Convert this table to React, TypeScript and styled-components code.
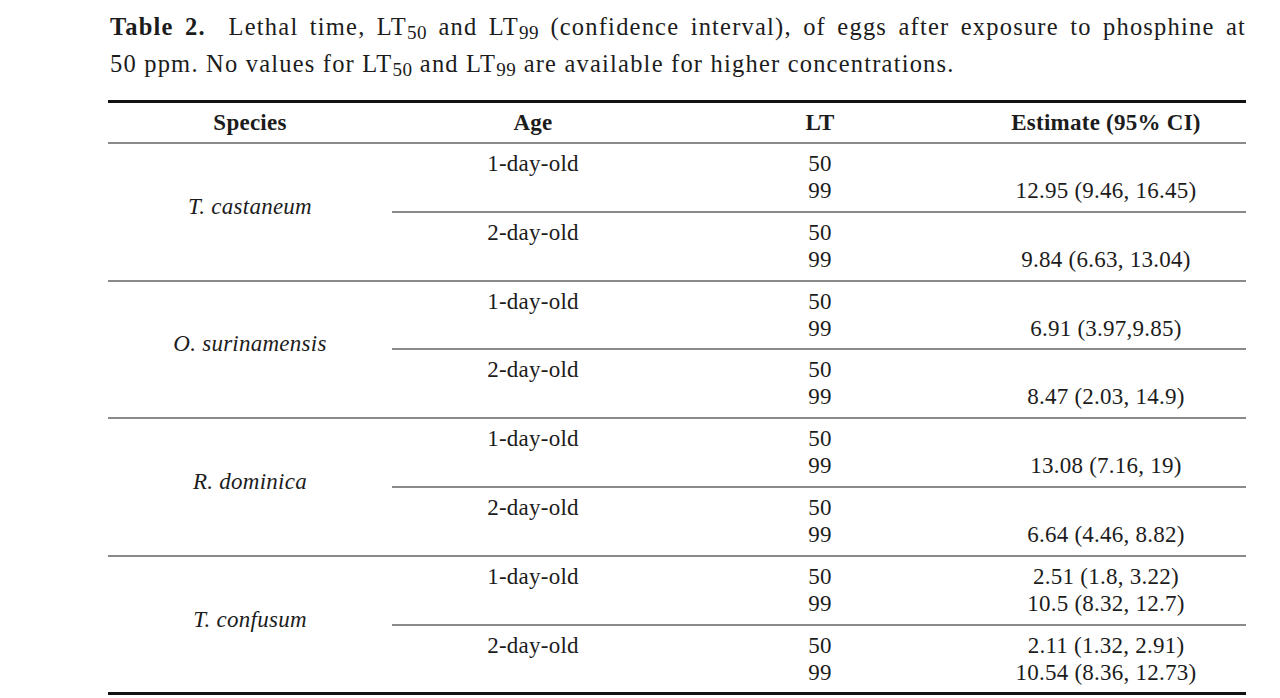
import * as React from 'react'
import styled, {createGlobalStyle} from 'styled-components'

const GlobalStyle = createGlobalStyle`
  html, body {
    margin: 0;
    padding: 0;
    background: #fff;
  }
  body {
    font-family: "Liberation Serif", "Times New Roman", serif;
    color: #1c1c1c;
  }
`

const StyledPage = styled.main`
  padding: 8px 0 0 108px;
  width: 1138px;
`

const StyledCaption = styled.p`
  margin: 0 0 18px 2px;
  font-size: 24.5px;
  line-height: 37px;
  letter-spacing: 1.2px;
`

const StyledCaptionLine = styled.span<{$justify?: boolean}>`
  display: block;
  text-align: ${(p) => (p.$justify ? 'justify' : 'left')};
  text-align-last: ${(p) => (p.$justify ? 'justify' : 'left')};
`

const StyledSub = styled.sub`
  font-size: 0.78em;
  vertical-align: -0.22em;
  line-height: 0;
  letter-spacing: 0.5px;
`

const StyledTable = styled.table`
  width: 1138px;
  border-collapse: collapse;
  table-layout: fixed;
  font-size: 23px;
  letter-spacing: 0.25px;
  border-top: 3px solid #111;
  border-bottom: 3px solid #111;
`

const StyledHeadCell = styled.th`
  font-weight: bold;
  text-align: center;
  line-height: 39px;
  padding: 0;
  border-bottom: 2px solid #8a8a8a;
`

const StyledSpeciesCell = styled.td`
  font-style: italic;
  text-align: center;
  vertical-align: middle;
  padding: 0 0 10px;
  border-bottom: 2px solid #8a8a8a;
`

const StyledCell = styled.td`
  text-align: center;
  vertical-align: top;
  line-height: 27px;
  padding: 6px 0 6.8px;
  border-bottom: 2px solid #8a8a8a;
`

const StyledLine = styled.div`
  height: 27px;
`

type AgeGroup = {age: string; est50: string; est99: string}
type Species = {name: string; groups: AgeGroup[]}

const data: Species[] = [
  {
    name: 'T. castaneum',
    groups: [
      {age: '1-day-old', est50: '', est99: '12.95 (9.46, 16.45)'},
      {age: '2-day-old', est50: '', est99: '9.84 (6.63, 13.04)'},
    ],
  },
  {
    name: 'O. surinamensis',
    groups: [
      {age: '1-day-old', est50: '', est99: '6.91 (3.97,9.85)'},
      {age: '2-day-old', est50: '', est99: '8.47 (2.03, 14.9)'},
    ],
  },
  {
    name: 'R. dominica',
    groups: [
      {age: '1-day-old', est50: '', est99: '13.08 (7.16, 19)'},
      {age: '2-day-old', est50: '', est99: '6.64 (4.46, 8.82)'},
    ],
  },
  {
    name: 'T. confusum',
    groups: [
      {age: '1-day-old', est50: '2.51 (1.8, 3.22)', est99: '10.5 (8.32, 12.7)'},
      {age: '2-day-old', est50: '2.11 (1.32, 2.91)', est99: '10.54 (8.36, 12.73)'},
    ],
  },
]

const App = () => {
  return (
    <StyledPage>
      <GlobalStyle />
      <StyledCaption>
        <StyledCaptionLine $justify>
          <b>Table 2.</b>&nbsp; Lethal time, LT<StyledSub>50</StyledSub> and LT
          <StyledSub>99</StyledSub> (confidence interval), of eggs after exposure to phosphine at
        </StyledCaptionLine>
        <StyledCaptionLine>
          50 ppm. No values for LT<StyledSub>50</StyledSub> and LT<StyledSub>99</StyledSub> are
          available for higher concentrations.
        </StyledCaptionLine>
      </StyledCaption>
      <StyledTable>
        <colgroup>
          <col style={{width: 284}} />
          <col style={{width: 282}} />
          <col style={{width: 292}} />
          <col style={{width: 280}} />
        </colgroup>
        <thead>
          <tr>
            <StyledHeadCell>Species</StyledHeadCell>
            <StyledHeadCell>Age</StyledHeadCell>
            <StyledHeadCell>LT</StyledHeadCell>
            <StyledHeadCell>Estimate (95% CI)</StyledHeadCell>
          </tr>
        </thead>
        {data.map((sp) => (
          <tbody key={sp.name}>
            {sp.groups.map((g, i) => (
              <tr key={g.age}>
                {i === 0 && (
                  <StyledSpeciesCell rowSpan={sp.groups.length}>{sp.name}</StyledSpeciesCell>
                )}
                <StyledCell>{g.age}</StyledCell>
                <StyledCell>
                  <StyledLine>50</StyledLine>
                  <StyledLine>99</StyledLine>
                </StyledCell>
                <StyledCell>
                  <StyledLine>{g.est50 || '\u00a0'}</StyledLine>
                  <StyledLine>{g.est99}</StyledLine>
                </StyledCell>
              </tr>
            ))}
          </tbody>
        ))}
      </StyledTable>
    </StyledPage>
  )
}

export default App
